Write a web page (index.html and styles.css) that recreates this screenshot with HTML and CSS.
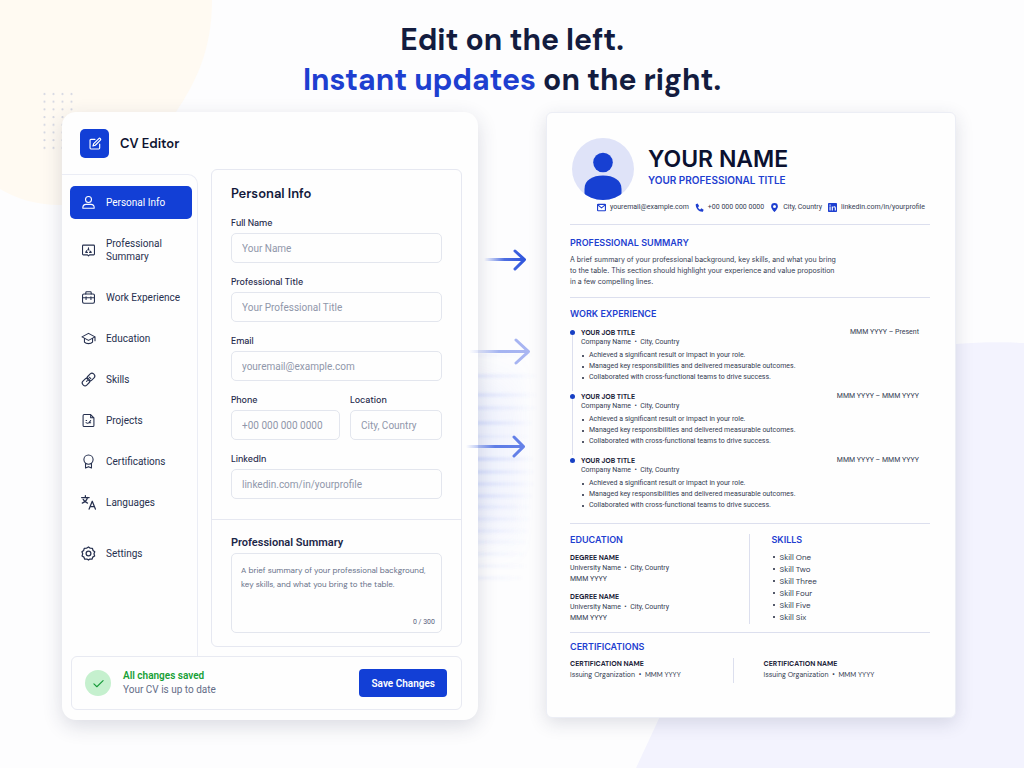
FILE: index.html
```html
<!DOCTYPE html>
<html lang="en">
<head>
<meta charset="utf-8">
<meta name="viewport" content="width=device-width, initial-scale=1">
<title>CV Editor</title>
<link rel="stylesheet" href="styles.css">
</head>
<body>
<svg class="blob blob-cream" viewBox="0 0 220 210" aria-hidden="true">
  <path fill="#fffaf2" d="M0 0H212C212 50 196 82 176 112C148 166 108 205 60 205C35 205 15 198 0 189Z"/>
  <defs><pattern id="dots" x="40" y="90" width="9" height="7.7" patternUnits="userSpaceOnUse"><circle cx="4.5" cy="4" r="1.1" fill="#d5d7e2"/></pattern></defs>
  <rect x="40" y="90" width="36" height="61" fill="url(#dots)"/>
</svg>
<svg class="blob blob-lavender" viewBox="0 0 388 428" aria-hidden="true">
  <path fill="#f3f3fe" d="M0 428C25 375 50 320 80 250C130 110 220 10 320 4C345 2 368 2 388 3V428Z"/>
</svg>

<main class="page">
  <h1 class="headline">Edit on the left.<br><span class="accent">Instant updates</span> on the right.</h1>

  <div class="stage">
    <section class="editor" aria-label="CV Editor">
      <header class="editor-header">
        <span class="logo">
          <svg viewBox="0 0 24 24" class="icon"><path d="M12 4H5a1.5 1.5 0 0 0-1.500 1.500v13.500a1.500 1.500 0 0 0 1.500 1.500h13.500a1.500 1.500 0 0 0 1.500-1.500v-7"/><path d="M18.500 2.800a1.900 1.900 0 0 1 2.700 2.700L12.500 14.200 8.500 15.500l1.300-4z"/></svg>
        </span>
        <h2 class="editor-title">CV Editor</h2>
      </header>

      <div class="editor-body">
        <nav class="sidebar">
          <a class="nav-item active" href="#personal"><svg viewBox="0 0 24 24" class="icon"><circle cx="12" cy="6.500" r="5.500"/><path d="M1.500 22.500v-1a6 6 0 0 1 6-6h9a6 6 0 0 1 6 6v1z"/></svg>Personal Info</a>
          <a class="nav-item tall" href="#summary"><svg viewBox="0 0 24 24" class="icon"><path d="M2.500 2h19A1.500 1.500 0 0 1 23 3.500v15a1.500 1.500 0 0 1-1.500 1.500H14l-2 2-2-2H2.500A1.500 1.500 0 0 1 1 18.500v-15A1.500 1.500 0 0 1 2.500 2z"/><path d="M12 7v3M9 12l-2 3M15 13l2 2M7 15.500h3M14 15.500h3M11 10l2 1"/></svg>Professional Summary</a>
          <a class="nav-item" href="#work"><svg viewBox="0 0 24 24" class="icon"><rect x="1" y="5.500" width="22" height="17" rx="2.500"/><path d="M7 5.500V3A1.500 1.500 0 0 1 8.500 1.500h7A1.500 1.500 0 0 1 17 3v2.500M1 12.500h22M7.500 10.500v5M16.500 10.500v5"/></svg>Work Experience</a>
          <a class="nav-item" href="#education"><svg viewBox="0 0 24 24" class="icon"><path d="M12 2.500 0 9l12 6.500L24 9zM4.500 11.500V18.500c3.500 4 11.500 4 15 0v-7M24 9v7"/></svg>Education</a>
          <a class="nav-item" href="#skills"><svg viewBox="0 0 24 24" class="icon"><g transform="rotate(-45 12 12)"><rect x="-2" y="7" width="15" height="10" rx="4.500"/><rect x="11" y="7" width="15" height="10" rx="4.500"/><path d="M7 12h2M16 10v4"/></g></svg>Skills</a>
          <a class="nav-item" href="#projects"><svg viewBox="0 0 24 24" class="icon"><path d="M4 1h12l6 6v14a2 2 0 0 1-2 2H4a2 2 0 0 1-2-2V3a2 2 0 0 1 2-2zM16 1v6h6M7.500 12h1M7.500 16c2 1.500 4 1.500 5.500 0l3-4M14 16h2"/></svg>Projects</a>
          <a class="nav-item" href="#certifications"><svg viewBox="0 0 24 24" class="icon"><circle cx="12" cy="8.500" r="8.500"/><path d="M6.500 15.500V24l5.500-2.500 5.500 2.500v-8.500"/></svg>Certifications</a>
          <a class="nav-item" href="#languages"><svg viewBox="0 0 24 24" class="icon icon-large"><path d="M1 4h12M7 1v3M10.500 4C9 9 6 11.500 2 13M3.500 7c2 3.500 4 5 7 6M13 22.500l5-12.500 5 12.500M14.700 18.500h6.600"/></svg>Languages</a>
          <a class="nav-item settings" href="#settings"><svg viewBox="0 0 24 24" class="icon icon-large"><path d="M12 1.500l2.800 2.100 3.500.1.900 3.400 2.800 2.100-1.200 3.300 1 3.400-3 1.900-1.200 3.300-3.500-.2L12 22.500l-2.600-1.600-3.500.2-1.200-3.300-3-1.900 1-3.400L1.500 9.200l2.800-2.100.9-3.400 3.500-.1z"/><circle cx="12" cy="12" r="3.800"/></svg>Settings</a>
        </nav>

        <form class="panel">
          <div class="panel-section fields" id="personal">
            <h3 class="panel-title">Personal Info</h3>
            <div class="field"><label for="name">Full Name</label><input id="name" type="text" placeholder="Your Name"></div>
            <div class="field"><label for="title">Professional Title</label><input id="title" type="text" placeholder="Your Professional Title"></div>
            <div class="field"><label for="email">Email</label><input id="email" type="email" placeholder="youremail@example.com"></div>
            <div class="field-row">
              <div class="field"><label for="phone">Phone</label><input id="phone" type="tel" placeholder="+00 000 000 0000"></div>
              <div class="field"><label for="location">Location</label><input id="location" type="text" placeholder="City, Country"></div>
            </div>
            <div class="field"><label for="linkedin">LinkedIn</label><input id="linkedin" type="text" placeholder="linkedin.com/in/yourprofile"></div>
          </div>
          <div class="panel-section summary" id="summary">
            <label class="summary-label" for="bio">Professional Summary</label>
            <div class="textarea-wrap">
              <textarea id="bio" placeholder="A brief summary of your professional background, key skills, and what you bring to the table."></textarea>
              <span class="counter">0 / 300</span>
            </div>
          </div>
        </form>
      </div>

      <footer class="save-bar">
        <span class="status-icon"><svg viewBox="0 0 24 24" class="icon"><path d="M3.500 12.500l5.500 5.500L20.500 6.500"/></svg></span>
        <div class="status-text">
          <p class="status-title">All changes saved</p>
          <p class="status-note">Your CV is up to date</p>
        </div>
        <button class="save-button" type="button">Save Changes</button>
      </footer>
    </section>

    <div class="connector" aria-hidden="true">
      <svg class="arrows" viewBox="0 0 84 608">
        <defs>
          <linearGradient id="a1" gradientUnits="userSpaceOnUse" x1="22" y1="0" x2="63" y2="0"><stop offset="0" stop-color="#2f55dc" stop-opacity="0"/><stop offset=".5" stop-color="#2f55dc" stop-opacity=".85"/><stop offset="1" stop-color="#2f55dc"/></linearGradient>
          <linearGradient id="a2" gradientUnits="userSpaceOnUse" x1="7" y1="0" x2="67" y2="0"><stop offset="0" stop-color="#8fa2ee" stop-opacity="0"/><stop offset=".5" stop-color="#8fa2ee" stop-opacity=".8"/><stop offset="1" stop-color="#aab6f2"/></linearGradient>
          <linearGradient id="a3" gradientUnits="userSpaceOnUse" x1="4" y1="0" x2="62" y2="0"><stop offset="0" stop-color="#4468e2" stop-opacity="0"/><stop offset=".5" stop-color="#4468e2" stop-opacity=".85"/><stop offset="1" stop-color="#6682e8"/></linearGradient>
          <linearGradient id="streak" x1="0" y1="0" x2="1" y2="0"><stop offset="0" stop-color="#6f8af0" stop-opacity=".24"/><stop offset=".6" stop-color="#6f8af0" stop-opacity=".11"/><stop offset="1" stop-color="#6f8af0" stop-opacity="0"/></linearGradient>
          <filter id="soft" x="-10%" y="-10%" width="120%" height="120%"><feGaussianBlur stdDeviation="0 1"/></filter>
          <filter id="haze" x="-10%" y="-20%" width="120%" height="140%"><feGaussianBlur stdDeviation="0 22"/></filter>
        </defs>
        <rect x="16" y="272" width="56" height="150" fill="url(#streak)" opacity=".5" filter="url(#haze)"/>
        <g fill="url(#streak)" filter="url(#soft)">
          <rect x="16" y="241" width="56" height="4" opacity=".2"/><rect x="16" y="262" width="60" height="4" opacity=".5"/><rect x="16" y="281" width="60" height="4" opacity=".6"/><rect x="16" y="294" width="60" height="4" opacity=".5"/><rect x="16" y="309" width="56" height="4" opacity=".7"/><rect x="16" y="323" width="52" height="3" opacity=".4"/><rect x="16" y="345" width="56" height="4" opacity=".8"/><rect x="16" y="358" width="58" height="4" opacity=".7"/><rect x="16" y="370" width="58" height="4" opacity=".6"/><rect x="16" y="382" width="56" height="4" opacity=".6"/><rect x="16" y="393" width="54" height="4" opacity=".4"/><rect x="16" y="405" width="54" height="4" opacity=".4"/><rect x="16" y="417" width="52" height="4" opacity=".4"/><rect x="16" y="428" width="52" height="4" opacity=".3"/><rect x="16" y="440" width="50" height="4" opacity=".3"/><rect x="16" y="452" width="50" height="4" opacity=".3"/><rect x="16" y="464" width="46" height="4" opacity=".3"/>
        </g>
        <g fill="none" stroke-width="3" stroke-linecap="round" stroke-linejoin="round">
          <path stroke="url(#a1)" d="M23 147.500L61 147.600M53 139l9.500 8.600L53 157"/>
          <path stroke="url(#a2)" d="M8 239.500L65 239.600M54 228l12.500 11.600L54 251"/>
          <path stroke="url(#a3)" d="M5 334.500L60 334.600M52 325l9.500 9.600L52 344"/>
        </g>
      </svg>
    </div>

    <article class="resume">
      <header class="resume-header">
        <div class="identity">
          <svg class="avatar" viewBox="0 0 62 62" aria-hidden="true"><clipPath id="round"><circle cx="31" cy="31" r="31"/></clipPath><g clip-path="url(#round)"><rect width="62" height="62" fill="#dfe3f8"/><circle cx="31" cy="24.500" r="9.800" fill="#1740d2"/><path fill="#1740d2" d="M12.500 62V51c0-9 8-13.500 18.500-13.500S49.500 42 49.500 51v11z"/></g></svg>
          <div class="identity-text">
            <h2 class="person-name">YOUR NAME</h2>
            <p class="person-title">YOUR PROFESSIONAL TITLE</p>
          </div>
        </div>
        <ul class="contacts">
          <li><svg viewBox="0 0 24 24" class="icon bold"><rect x="1.500" y="3.500" width="21" height="17" rx="1.500"/><path d="M2 5l10 8 10-8"/></svg>youremail@example.com</li>
          <li><svg viewBox="0 0 24 24" class="icon solid"><path d="M2 3l5-2 4 7-3 3c1 3 3 5 6 6l3-3 6 4-2 5C11 24 1 14 2 3z"/></svg>+00 000 000 0000</li>
          <li><svg viewBox="0 0 24 24" class="icon solid"><path fill-rule="evenodd" d="M12 0a9 9 0 0 1 9 9c0 6-9 15-9 15S3 15 3 9a9 9 0 0 1 9-9zm0 5a4 4 0 1 0 0 8 4 4 0 0 0 0-8z"/></svg>City, Country</li>
          <li><svg viewBox="0 0 24 24" class="icon solid"><rect width="24" height="24" rx="2"/><path fill="#fff" d="M4 9h3v11H4zM4 4h3v3H4zM10 9h3v2c2-3.500 8-3 8 2v7h-3v-6c0-3.500-5-3.500-5 0v6h-3z"/></svg>linkedin.com/in/yourprofile</li>
        </ul>
      </header>

      <section class="block about">
        <h3 class="block-title">PROFESSIONAL SUMMARY</h3>
        <p class="about-text">A brief summary of your professional background, key skills, and what you bring<br>to the table. This section should highlight your experience and value proposition<br>in a few compelling lines.</p>
      </section>

      <section class="block work">
        <h3 class="block-title">WORK EXPERIENCE</h3>
        <ol class="jobs">
          <li class="job"><div class="job-head"><h4>YOUR JOB TITLE</h4><span>MMM YYYY – Present</span></div><p class="company">Company Name &nbsp;•&nbsp; City, Country</p>
            <ul class="points"><li>Achieved a significant result or impact in your role.</li><li>Managed key responsibilities and delivered measurable outcomes.</li><li>Collaborated with cross-functional teams to drive success.</li></ul></li>
          <li class="job"><div class="job-head"><h4>YOUR JOB TITLE</h4><span>MMM YYYY – MMM YYYY</span></div><p class="company">Company Name &nbsp;•&nbsp; City, Country</p>
            <ul class="points"><li>Achieved a significant result or impact in your role.</li><li>Managed key responsibilities and delivered measurable outcomes.</li><li>Collaborated with cross-functional teams to drive success.</li></ul></li>
          <li class="job"><div class="job-head"><h4>YOUR JOB TITLE</h4><span>MMM YYYY – MMM YYYY</span></div><p class="company">Company Name &nbsp;•&nbsp; City, Country</p>
            <ul class="points"><li>Achieved a significant result or impact in your role.</li><li>Managed key responsibilities and delivered measurable outcomes.</li><li>Collaborated with cross-functional teams to drive success.</li></ul></li>
        </ol>
      </section>

      <div class="block split">
        <section class="education">
          <h3 class="block-title">EDUCATION</h3>
          <div class="degree"><h4>DEGREE NAME</h4><p>University Name &nbsp;•&nbsp; City, Country</p><p>MMM YYYY</p></div>
          <div class="degree"><h4>DEGREE NAME</h4><p>University Name &nbsp;•&nbsp; City, Country</p><p>MMM YYYY</p></div>
        </section>
        <section class="skills">
          <h3 class="block-title">SKILLS</h3>
          <ul class="points"><li>Skill One</li><li>Skill Two</li><li>Skill Three</li><li>Skill Four</li><li>Skill Five</li><li>Skill Six</li></ul>
        </section>
      </div>

      <section class="block certs">
        <h3 class="block-title">CERTIFICATIONS</h3>
        <div class="cert-grid">
          <div class="cert"><h4>CERTIFICATION NAME</h4><p>Issuing Organization &nbsp;•&nbsp; MMM YYYY</p></div>
          <div class="cert"><h4>CERTIFICATION NAME</h4><p>Issuing Organization &nbsp;•&nbsp; MMM YYYY</p></div>
        </div>
      </section>
    </article>
  </div>
</main>
</body>
</html>
```
FILE: styles.css
```css
:root {
  --display: "DM Sans", Inter, "Liberation Sans", sans-serif;
  --caps: Inter, "Liberation Sans", sans-serif;
  --text: Roboto, "Liberation Sans", sans-serif;
}

* { box-sizing: border-box; }

body {
  margin: 0;
  min-height: 100vh;
  position: relative;
  overflow-x: hidden;
  background: #fdfdfe;
  color: #1c2748;
  font-family: var(--text);
}

h1, h2, h3, h4, p, ul, ol { margin: 0; padding: 0; }
ul, ol { list-style: none; }

.icon {
  flex: none;
  fill: none;
  stroke: currentColor;
  stroke-width: 2;
  stroke-linecap: round;
  stroke-linejoin: round;
  overflow: visible;
}

/* Background shapes */
.blob { position: absolute; }
.blob-cream { top: 0; left: 0; width: 220px; }
.blob-lavender { right: 0; bottom: 0; width: 388px; }

.page { position: relative; padding: 20px 68px 48px 62px; }

.headline {
  margin-right: -6px;
  font-family: var(--display);
  font-size: 30px;
  line-height: 40px;
  font-weight: 700;
  text-align: center;
  color: #131c3f;
}
.accent { color: #1e3fd0; }

.stage {
  display: grid;
  grid-template-columns: minmax(0, 416fr) minmax(0, 68fr) minmax(0, 410fr);
  align-items: start;
  margin-top: 12px;
}

/* Editor */
.editor {
  position: relative;
  padding-bottom: 10px;
  border-radius: 14px;
  background: #fefefe;
  box-shadow: 0 6px 20px rgba(40, 44, 80, .16);
}
.editor-header {
  display: flex;
  align-items: center;
  gap: 11px;
  height: 57px;
  padding: 6px 18px 0;
}
.logo {
  display: grid;
  place-items: center;
  width: 29px;
  height: 29px;
  border-radius: 5px;
  background: #123fd6;
  color: #fff;
}
.logo .icon { width: 14px; }
.editor-title { font-family: var(--display); font-size: 13px; font-weight: 600; color: #0d1330; }

.editor-body { display: grid; grid-template-columns: 136px 1fr; gap: 13px; padding-right: 16px; }

.sidebar {
  display: flex;
  flex-direction: column;
  gap: 8px;
  margin-top: 5px;
  padding: 11px 5px 0 8px;
  border: 1px solid #ebedf5;
  border-width: 1px 1px 0 0;
  border-top-right-radius: 10px;
}
.nav-item {
  display: flex;
  align-items: center;
  gap: 11px;
  min-height: 33px;
  padding: 0 4px 0 12px;
  border-radius: 5px;
  color: #26304f;
  font-size: 10px;
  line-height: 13px;
  text-decoration: none;
}
.nav-item .icon { width: 13px; height: 13px; }
.nav-item .icon-large { width: 15px; height: 15px; margin: 0 -1px; }
.nav-item.active { background: #123fd6; color: #fff; }
.nav-item.tall { min-height: 46px; }
.nav-item.settings { margin-top: 10px; }

.panel { margin-bottom: 9px; border: 1px solid #e6e8f1; border-radius: 6px; }
.panel-section { padding: 0 19px; }
.fields { display: grid; gap: 9px; padding-top: 14px; padding-bottom: 20px; border-bottom: 1px solid #e6e8f1; }
.panel-title { font-family: var(--display); font-size: 13px; line-height: 20px; font-weight: 600; color: #11183a; }
.field { display: flex; flex-direction: column; min-width: 0; }
.field label { font-family: var(--display); font-size: 9px; line-height: 20px; font-weight: 500; color: #1f2a4c; }
.field-row { display: grid; grid-template-columns: 109fr 92fr; gap: 10px; }

input, textarea {
  width: 100%;
  border: 1px solid #e3e6ee;
  border-radius: 5px;
  background: #fefefe;
  color: #1c2748;
  font-family: inherit;
  font-size: 10px;
}
input { height: 30px; padding: 0 10px; }
input::placeholder { color: #9097aa; opacity: 1; }
.summary { padding-top: 13px; padding-bottom: 13px; }
.summary-label { display: block; font-size: 11px; line-height: 20px; font-weight: 600; }
.textarea-wrap { position: relative; }
textarea { display: block; height: 80px; padding: 9px 4px 9px 9px; font-family: var(--display); font-size: 8px; line-height: 14px; resize: none; }
textarea::placeholder { color: #677089; opacity: 1; }
.counter { position: absolute; right: 7px; bottom: 5px; font-size: 7px; line-height: 12px; color: #59627c; }

.save-bar {
  display: flex;
  align-items: center;
  gap: 12px;
  margin: 0 16px 0 9px;
  padding: 12px 14px 12px 13px;
  border: 1px solid #e8eaf2;
  border-radius: 6px;
}
.status-icon { display: grid; place-items: center; width: 26px; height: 26px; border-radius: 50%; background: #c5f0ce; color: #159a38; }
.status-icon .icon { width: 13px; }
.status-text { flex: 1; font-size: 10px; line-height: 14px; }
.status-title { font-weight: 600; color: #16a035; }
.status-note { color: #646d87; }
.save-button {
  height: 28px;
  padding: 0 12px;
  border: 0;
  border-radius: 4px;
  background: #123fd6;
  color: #fff;
  font-family: inherit;
  font-size: 10px;
  font-weight: 600;
}

/* Arrows overlap both cards */
.connector { position: relative; z-index: 1; }
.arrows { position: absolute; top: 0; left: -16px; width: 84px; }

/* Resume */
.resume {
  padding: 25px 25px 34px 23px;
  border: 1px solid #eceef5;
  border-radius: 6px;
  background: #fefefe;
  box-shadow: 0 5px 18px rgba(40, 44, 80, .15);
  font-size: 7px;
  line-height: 11px;
  color: #343c52;
}
.resume h4 { font-family: var(--display); font-size: 7px; line-height: 11px; font-weight: 700; color: #1b2238; }

.identity { display: flex; align-items: center; gap: 14px; padding-left: 2px; }
.identity-text { padding-bottom: 4px; }
.avatar { flex: none; width: 62px; }
.person-name { font-family: var(--caps); font-size: 23px; line-height: 26px; font-weight: 600; color: #0b1130; }
.person-title { font-family: var(--caps); font-size: 10px; line-height: 16px; font-weight: 600; color: #1e3fd0; }
.contacts { display: flex; justify-content: space-between; padding: 2px 5px 0 27px; white-space: nowrap; }
.contacts li { display: flex; align-items: center; gap: 4px; }
.contacts .icon { width: 9px; height: 9px; color: #1e3fd0; }
.icon.bold { stroke-width: 3; }
.icon.solid { fill: currentColor; stroke: none; }

.block { border-top: 1px solid #dcdfee; }
.resume-header { padding-bottom: 11px; }
.block-title { font-family: var(--caps); font-size: 9px; line-height: 12px; font-weight: 600; color: #1e3fd0; }
.about { padding: 12px 0 10px; }
.about-text { margin-top: 5px; font-family: var(--caps); }

.work { padding: 10px 0 12px; }
.jobs { margin-top: 7px; }
.job { position: relative; padding: 0 11px 8px; }
.job:last-child { padding-bottom: 0; }
.job::before { content: ""; position: absolute; left: 0; top: 3px; width: 5px; height: 5px; border-radius: 50%; background: #1740c4; }
.job:not(:last-child)::after { content: ""; position: absolute; left: 2px; top: 8px; bottom: 0; width: 1px; background: #dcdfee; }
.job-head { display: flex; justify-content: space-between; }
.company { line-height: 9px; }
.points li { position: relative; padding-left: 8px; }
.points li::before { content: ""; position: absolute; left: 1px; top: 5px; width: 2px; height: 2px; border-radius: 50%; background: #1b2238; }
.job .points { margin-top: 3px; }

.split { display: grid; grid-template-columns: 180fr 181fr; padding: 10px 0 8px; }
.education { border-right: 1px solid #dcdfee; }
.degree { margin-top: 6px; }
.skills { padding-left: 22px; }
.skills .points { margin-top: 5px; font-family: var(--display); font-size: 8px; line-height: 12px; }

.certs { padding-top: 8px; }
.cert-grid { display: grid; grid-template-columns: 164fr 197fr; margin-top: 5px; }
.cert p { font-family: var(--display); }
.cert + .cert { padding-left: 30px; }
.cert:first-child { border-right: 1px solid #dcdfee; padding-bottom: 3px; }
```
